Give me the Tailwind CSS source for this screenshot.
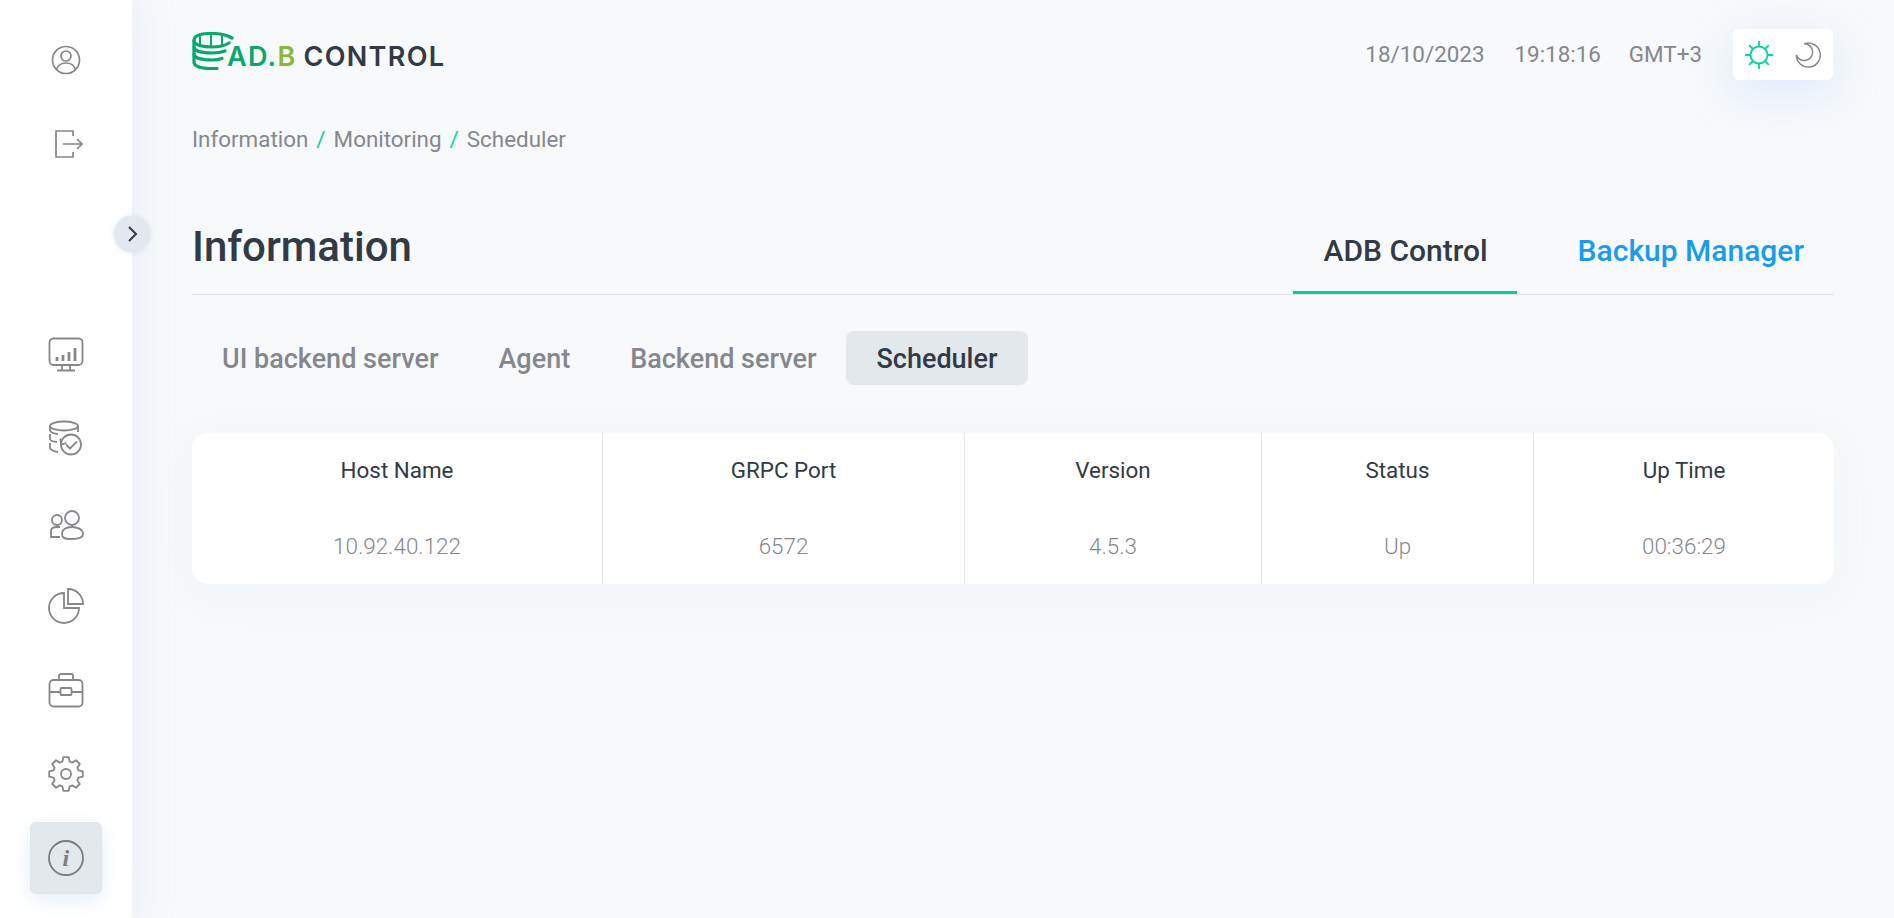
<!DOCTYPE html>
<html lang="en">
<head>
<meta charset="utf-8">
<title>Information</title>
<script src="https://cdn.jsdelivr.net/npm/@tailwindcss/browser@4"></script>
</head>
<body class="bg-[#f7f9fb] font-['Roboto',sans-serif] text-[22.4px] text-[#85878d] overflow-hidden">
<div class="flex h-[918px] w-[1894px]">
  <aside class="relative z-10 flex h-full w-[132px] shrink-0 flex-col items-center bg-white shadow-[0_0_36px_rgba(190,215,235,0.35)]">
    <div class="mt-[18px] flex h-[84px] w-[72px] items-center justify-center">
      <svg class="h-9 w-9" viewBox="0 0 36 36" fill="none" stroke="#85878d" stroke-width="1.7"><circle cx="18" cy="18" r="13.5"/><circle cx="18" cy="14" r="5"/><path d="M8.5 27.5C10 22.5 14 21 18 21s8 1.500 9.500 6.500"/></svg>
    </div>
    <div class="flex h-[84px] w-[72px] items-center justify-center">
      <svg class="h-9 w-9" viewBox="0 0 36 36" fill="none" stroke="#85878d" stroke-width="1.7"><path d="M25 10V5H8V31H25V26"/><path d="M15 18H34M29 13l5 5-5 5"/></svg>
    </div>
    <button class="absolute top-[216px] left-[114px] flex h-9 w-9 items-center justify-center rounded-full bg-[#e2e8ee] shadow-[0_0_4px_rgba(190,205,230,0.6)]">
      <svg class="h-5 w-5" viewBox="0 0 20 20" fill="none" stroke="#323a45" stroke-width="2"><path d="M7 3L14 10l-7 7"/></svg>
    </button>
    <nav class="mt-[126px] flex flex-col items-center">
      <a class="flex h-[84px] w-[72px] items-center justify-center">
        <svg class="h-9 w-9" viewBox="0 0 36 36" fill="none" stroke="#85878d" stroke-width="1.8"><rect x="1.500" y="2.500" width="33" height="26.500" rx="4"/><path d="M14 29v5M22 29v5M9 34.500H27"/><path stroke-width="2.800" d="M9 25v-4M15 25v-6M21 25v-9M27 25v-13"/></svg>
      </a>
      <a class="flex h-[84px] w-[72px] items-center justify-center">
        <svg class="h-9 w-9" viewBox="0 0 36 36" fill="none" stroke="#85878d" stroke-width="1.8"><ellipse cx="16" cy="6" rx="14" ry="4.500"/><path d="M2 6V10C2 12 5 13.500 10 14M2 14V19C2 20.500 5 21.500 9 22M2 23V28C2 30 5 31 10 32M30 6V12"/><circle cx="23" cy="24.500" r="10"/><path d="M12.500 18.500l0.500 6 5.500-1.500"/><path d="M18 24.500l4 4 7-7"/></svg>
      </a>
      <a class="flex h-[84px] w-[72px] items-center justify-center">
        <svg class="h-9 w-9" viewBox="0 0 36 36" fill="none" stroke="#85878d" stroke-width="1.8"><circle cx="24" cy="14" r="7"/><path d="M14 30C14 25 19 23 24 23S35 25 35 30C35 33 33 35 24 35S14 33 14 30Z"/><circle cx="9" cy="16" r="5"/><path d="M12 33H3V27C3 25 5 23 9 23H12"/></svg>
      </a>
      <a class="flex h-[84px] w-[72px] items-center justify-center">
        <svg class="h-9 w-9" viewBox="0 0 36 36" fill="none" stroke="#85878d" stroke-width="1.8"><path d="M16 5A15 15 0 1 0 31 20H16Z"/><path d="M20 1V16H35A15 15 0 0 0 20 1Z"/></svg>
      </a>
      <a class="flex h-[84px] w-[72px] items-center justify-center">
        <svg class="h-9 w-9" viewBox="0 0 36 36" fill="none" stroke="#85878d" stroke-width="1.8"><rect x="1.500" y="8" width="33" height="26.500" rx="4"/><path d="M11 8V4a2 2 0 0 1 2-2h10a2 2 0 0 1 2 2v4"/><path d="M1.500 20H12.500M23.500 20H34.500"/><rect x="12.500" y="16" width="11" height="7" rx="1"/></svg>
      </a>
      <a class="flex h-[84px] w-[72px] items-center justify-center">
        <svg class="h-9 w-9" viewBox="0 0 36 36" fill="none" stroke="#85878d" stroke-width="1.8" stroke-linejoin="round"><polygon points="14.420,5.500 15.340,1.210 20.660,1.210 21.580,5.500 24.300,6.630 27.990,4.250 31.750,8.010 29.370,11.700 30.500,14.420 34.790,15.340 34.790,20.660 30.500,21.580 29.370,24.300 31.750,27.990 27.990,31.750 24.300,29.370 21.580,30.500 20.660,34.790 15.340,34.790 14.420,30.500 11.700,29.370 8.010,31.750 4.250,27.990 6.630,24.300 5.500,21.580 1.210,20.660 1.210,15.340 5.500,14.420 6.630,11.700 4.250,8.010 8.010,4.250 11.700,6.630"/><circle cx="18" cy="18" r="5"/></svg>
      </a>
      <a class="mt-[6px] flex h-[72px] w-[72px] items-center justify-center rounded-[6px] border border-[#dfe6ec] bg-[#e2e8ec] shadow-[0_6px_20px_rgba(190,215,245,0.4)]">
        <svg class="h-9 w-9" viewBox="0 0 36 36" fill="none" stroke="#7a7c82" stroke-width="1.800"><circle cx="18" cy="18" r="17"/><text x="14.500" y="26" font-family="Liberation Serif" font-style="italic" font-weight="700" font-size="24" fill="#7a7c82" stroke="none">i</text></svg>
      </a>
    </nav>
  </aside>

  <main class="flex-1 pt-[29px] pr-[60px] pl-[60px]">
    <header class="flex h-[51px] items-start justify-between">
      <div class="flex items-start">
        <svg class="mt-[3px] -mr-[7px] h-[38px] w-[42px]" viewBox="0 0 42 38" fill="none" stroke="#08a86b" stroke-width="3.200" stroke-linecap="round"><path d="M40 6C34 2.500 26 1.500 20 1.500C10 1.500 2 3.500 2 8.500C2 13 11 15 20 15C27 15 33 13.500 37 11"/><path d="M8 12V5M19 14V3M30 13V4" stroke-width="2"/><path d="M2 8.500V15C2 19 10 21 20 21C25 21 29 20.500 33 19"/><path d="M2 15V22C2 26 10 28 20 28C24 28 27 27.500 30 26.500"/><path d="M2 22V30C2 34.500 10 36.500 20 36.500H25"/></svg>
        <div class="mt-[13px] flex items-baseline font-['Inter',sans-serif] text-[27px] leading-[30px] font-semibold tracking-[1.300px]">
          <span class="text-[#08a86b]">AD.</span><span class="text-[#8ab83a]">B</span><span class="ml-[7px] text-[#323a45]">CONTROL</span>
        </div>
      </div>
      <div class="flex h-[51px] items-center">
        <span class="pb-[2px] leading-7">18/10/2023</span>
        <span class="ml-[30px] pb-[2px] leading-7">19:18:16</span>
        <span class="ml-[28px] pb-[2px] leading-7">GMT+3</span>
        <div class="mr-[1px] ml-[31px] flex h-[51px] w-[100px] items-center justify-between rounded-[6px] bg-white pr-[12px] pl-[11px] shadow-[0_12px_44px_rgba(185,210,250,0.4)]">
          <svg class="h-[30px] w-[30px]" viewBox="0 0 30 30" fill="none" stroke="#07d3a0" stroke-width="1.800"><circle cx="15" cy="15" r="8.500"/><path d="M15 1V6.500M15 23.500V29M1 15H6.500M23.500 15H29M5.100 5.100L9 9M21 21L24.900 24.900M24.900 5.100L21 9M9 21L5.100 24.900"/></svg>
          <svg class="h-[26px] w-[26px]" viewBox="0 0 26 26" fill="none" stroke="#85878d" stroke-width="1.500"><path d="M9.300 1.700A12 12 0 1 1 1.300 13A8.400 8.400 0 1 0 9.300 1.700Z"/></svg>
        </div>
      </div>
    </header>

    <nav class="mt-[45px] flex h-7 items-center leading-7">
      <span>Information</span><span class="mx-[8px] text-[#07d3a0]">/</span><span>Monitoring</span><span class="mx-[8px] text-[#07d3a0]">/</span><span>Scheduler</span>
    </nav>

    <section class="mt-[69px] flex items-start justify-between border-b border-[#e2e4e9]">
      <h1 class="pt-[1px] text-[42px] leading-[48px] font-medium text-[#323a45]">Information</h1>
      <div class="flex gap-[31px]">
        <a class="border-b-[3px] border-[#05cf9c] pt-[13px] pr-[29px] pb-[24px] pl-[31px] text-[30px] leading-8 font-medium text-[#323a45]">ADB Control</a>
        <a class="border-b-[3px] border-transparent px-[30px] pt-[13px] pb-[24px] text-[30px] leading-8 font-medium text-[#1a9bec]">Backup Manager</a>
      </div>
    </section>

    <div class="mt-[36px] flex">
      <a class="flex h-[54px] items-center rounded-[8px] px-[30px] pt-[2px] text-[27px] font-medium text-[#85878d]">UI backend server</a>
      <a class="flex h-[54px] items-center rounded-[8px] px-[30px] pt-[2px] text-[27px] font-medium text-[#85878d]">Agent</a>
      <a class="flex h-[54px] items-center rounded-[8px] px-[30px] pt-[2px] text-[27px] font-medium text-[#85878d]">Backend server</a>
      <a class="flex h-[54px] items-center rounded-[8px] bg-[#e2e8eb] px-[30px] pt-[2px] text-[27px] font-medium text-[#323a45]">Scheduler</a>
    </div>

    <div class="mt-[48px] grid h-[151px] grid-cols-[411px_362px_297px_272px_1fr] grid-rows-2 rounded-[16px] bg-white shadow-[0_8px_44px_rgba(236,239,244,0.4)]">
      <div class="flex items-center justify-center border-r border-[#e5e9ec] text-[#323a45]">Host Name</div>
      <div class="flex items-center justify-center border-r border-[#e5e9ec] text-[#323a45]">GRPC Port</div>
      <div class="flex items-center justify-center border-r border-[#e5e9ec] text-[#323a45]">Version</div>
      <div class="flex items-center justify-center border-r border-[#e5e9ec] text-[#323a45]">Status</div>
      <div class="flex items-center justify-center text-[#323a45]">Up Time</div>
      <div class="flex items-center justify-center border-r border-[#e5e9ec] pt-px font-light">10.92.40.122</div>
      <div class="flex items-center justify-center border-r border-[#e5e9ec] pt-px font-light">6572</div>
      <div class="flex items-center justify-center border-r border-[#e5e9ec] pt-px font-light">4.5.3</div>
      <div class="flex items-center justify-center border-r border-[#e5e9ec] pt-px font-light">Up</div>
      <div class="flex items-center justify-center pt-px font-light">00:36:29</div>
    </div>
  </main>
</div>
</body>
</html>
